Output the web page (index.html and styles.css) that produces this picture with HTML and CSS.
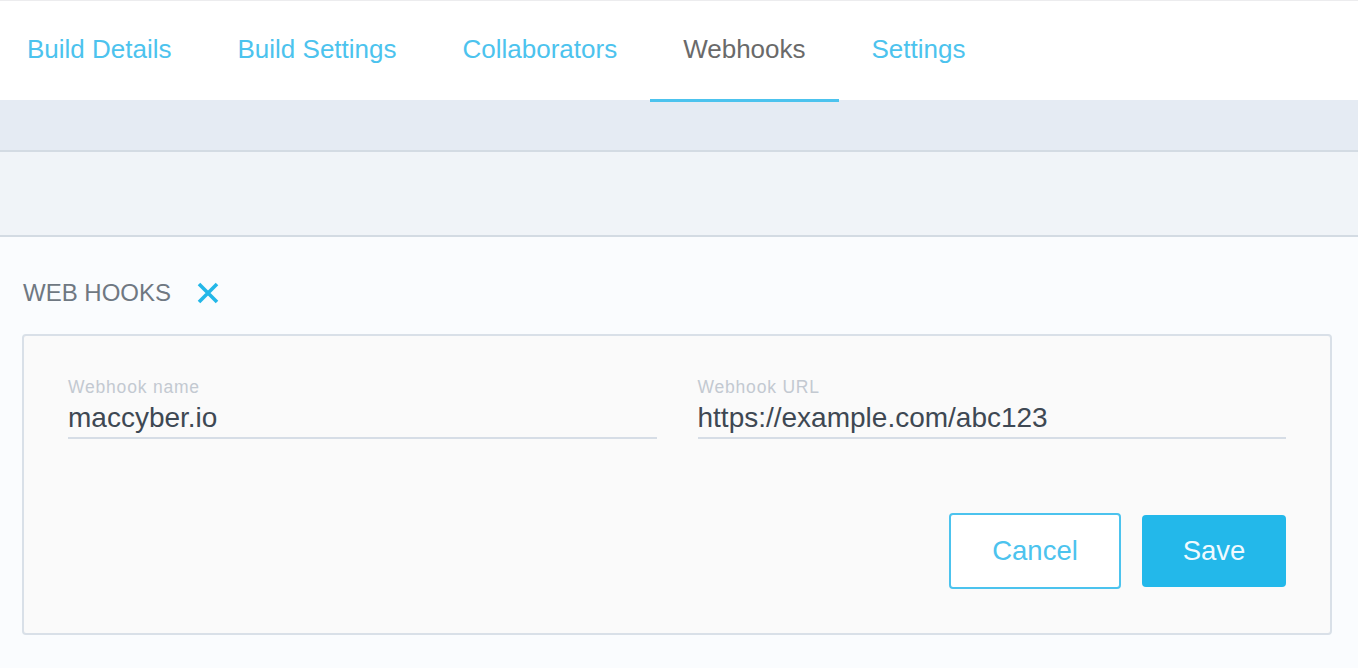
FILE: index.html
```html
<!DOCTYPE html>
<html>
<head>
<meta charset="utf-8">
<link rel="stylesheet" href="styles.css">
</head>
<body>
<nav class="tabs">
  <a class="tab tab-first">Build Details</a>
  <a class="tab">Build Settings</a>
  <a class="tab">Collaborators</a>
  <a class="tab active">Webhooks</a>
  <a class="tab">Settings</a>
</nav>
<div class="band"></div>
<div class="subband"></div>
<main class="content">
  <div class="section-title">
    <span>WEB HOOKS</span>
    <svg class="close" width="22" height="22" viewBox="0 0 22 22"><path d="M2 2L20 20M20 2L2 20" stroke="#23b7e8" stroke-width="3.6" stroke-linecap="butt"/></svg>
  </div>
  <div class="card">
    <div class="fields">
      <div class="field">
        <label>Webhook name</label>
        <div class="value">maccyber.io</div>
      </div>
      <div class="field">
        <label>Webhook URL</label>
        <div class="value">https://example.com/abc123</div>
      </div>
    </div>
    <div class="actions">
      <button class="btn btn-cancel">Cancel</button>
      <button class="btn btn-save">Save</button>
    </div>
  </div>
</main>
</body>
</html>
```
FILE: styles.css
```css
html, body {
  margin: 0;
  padding: 0;
  background: #fafcfe;
  font-family: "Liberation Sans", Arial, sans-serif;
}
.tabs {
  display: flex;
  height: 100px;
  background: #ffffff;
  border-top: 1px solid #ececee;
  box-sizing: border-box;
}
.tab {
  display: flex;
  align-items: center;
  padding: 0 33px 2px;
  font-size: 26px;
  color: #4cc3ee;
  box-sizing: border-box;
  height: 101px;
  border-bottom: 3px solid transparent;
  position: relative;
  z-index: 1;
}
.tab-first {
  padding-left: 27px;
}
.tab.active {
  color: #6a6a6a;
  border-bottom-color: #4cc3ee;
}
.band {
  height: 50px;
  background: #e5ebf3;
  border-bottom: 2px solid #d3dbe3;
}
.subband {
  height: 83px;
  background: #f0f4f8;
  border-bottom: 2px solid #d3dbe3;
}
.content {
  padding: 44px 26px 0 22px;
}
.section-title {
  display: flex;
  align-items: center;
  gap: 26px;
  height: 24px;
  padding-left: 1px;
  font-size: 24px;
  color: #6f7882;
}
.card {
  margin-top: 29px;
  height: 301px;
  box-sizing: border-box;
  border: 2px solid #d9e0e8;
  border-radius: 4px;
  background: #fafafa;
  padding: 40px 44px 0 44px;
}
.fields {
  display: flex;
  gap: 41px;
}
.field {
  flex: 1;
  display: flex;
  flex-direction: column;
  border-bottom: 2px solid #d6dde6;
  padding-bottom: 1px;
}
.field label {
  font-size: 17.5px;
  letter-spacing: 0.8px;
  color: #c3c9d1;
  line-height: 22px;
}
.value {
  font-size: 28px;
  color: #3e4853;
  line-height: 36px;
  margin-top: 2px;
}
.actions {
  display: flex;
  justify-content: flex-end;
  align-items: center;
  gap: 21px;
  margin-top: 74px;
}
.btn {
  font-family: "Liberation Sans", Arial, sans-serif;
  font-size: 27.5px;
  border-radius: 4px;
  cursor: pointer;
}
.btn-cancel {
  width: 172px;
  height: 76px;
  background: #ffffff;
  border: 2px solid #4cc3ee;
  color: #4cc3ee;
}
.btn-save {
  width: 144px;
  height: 72px;
  background: #23b8ea;
  border: none;
  color: #f0faff;
}
```
